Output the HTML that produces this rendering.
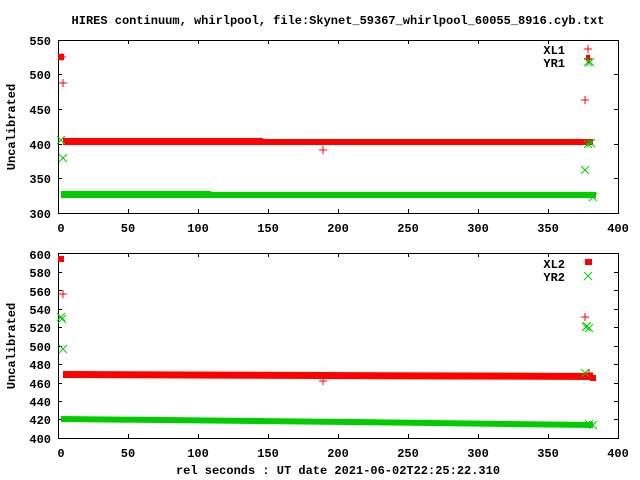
<!DOCTYPE html>
<html><head><style>
html,body{margin:0;padding:0;background:#fff;}
svg{display:block}
text{font-family:"Liberation Mono",monospace;font-weight:bold;font-size:12px;fill:#000}
</style></head><body>
<svg width="640" height="480" viewBox="0 0 640 480" xmlns="http://www.w3.org/2000/svg">
<defs>
<symbol id="p" overflow="visible"><path d="M-4 0H4M0 -4V4" stroke="#f00" stroke-width="1"/></symbol>
<symbol id="x" overflow="visible"><path d="M-4 -4L4 4M-4 4L4 -4" stroke="#0c0" stroke-width="1"/></symbol>
</defs>
<text x="338" y="24" text-anchor="middle">HIRES continuum, whirlpool, file:Skynet_59367_whirlpool_60055_8916.cyb.txt</text>

<!-- Plot 1 -->
<g stroke="#000" stroke-width="1" fill="none">
<rect x="58.5" y="40.5" width="560" height="173"/>
<path d="M128.5 213V209M198.5 213V209M268.5 213V209M338.5 213V209M408.5 213V209M478.5 213V209M548.5 213V209
M128.5 40V44M198.5 40V44M268.5 40V44M338.5 40V44M408.5 40V44M478.5 40V44M548.5 40V44
M58 74.5H62M58 109.5H62M58 144.5H62M58 178.5H62
M618 74.5H614M618 109.5H614M618 144.5H614M618 178.5H614"/>
</g>
<g text-anchor="end">
<text x="51" y="45">550</text><text x="51" y="79">500</text><text x="51" y="114">450</text>
<text x="51" y="149">400</text><text x="51" y="183">350</text><text x="51" y="218">300</text>
</g>
<g text-anchor="middle">
<text x="61" y="232">0</text><text x="128" y="232">50</text><text x="198" y="232">100</text>
<text x="268" y="232">150</text><text x="338" y="232">200</text><text x="408" y="232">250</text>
<text x="478" y="232">300</text><text x="548" y="232">350</text><text x="618" y="232">400</text>
</g>
<text transform="translate(15,127) rotate(-90)" text-anchor="middle">Uncalibrated</text>
<text x="565" y="54" text-anchor="end">XL1</text>
<text x="565" y="67" text-anchor="end">YR1</text>
<use href="#p" x="588" y="49"/>
<use href="#x" x="588" y="62"/>
<!-- data 1 -->
<rect x="63" y="139" width="530" height="6" fill="#f00"/>
<rect x="63" y="138" width="200" height="2" fill="#f00"/>
<rect x="61" y="192" width="535" height="6" fill="#0c0"/>
<rect x="61" y="191" width="150" height="2" fill="#0c0"/>
<rect x="58" y="54" width="6" height="6" fill="#f00"/>
<use href="#p" x="62" y="57"/><use href="#p" x="63" y="83"/>
<use href="#x" x="61" y="140"/><use href="#x" x="63" y="158"/>
<use href="#p" x="323" y="150"/>
<use href="#p" x="585" y="100"/><use href="#x" x="585" y="170"/>
<use href="#p" x="588" y="59"/><rect x="586" y="55" width="4" height="5" fill="#f00"/>
<use href="#x" x="588" y="144"/><use href="#x" x="591" y="143"/>
<use href="#x" x="593" y="197"/><use href="#x" x="590" y="62"/>

<!-- Plot 2 -->
<g stroke="#000" stroke-width="1" fill="none">
<rect x="58.5" y="253.5" width="560" height="185"/>
<path d="M128.5 438V434M198.5 438V434M268.5 438V434M338.5 438V434M408.5 438V434M478.5 438V434M548.5 438V434
M128.5 253V257M198.5 253V257M268.5 253V257M338.5 253V257M408.5 253V257M478.5 253V257M548.5 253V257
M58 272.5H62M58 290.5H62M58 309.5H62M58 327.5H62M58 346.5H62M58 364.5H62M58 383.5H62M58 401.5H62M58 419.5H62
M618 272.5H614M618 290.5H614M618 309.5H614M618 327.5H614M618 346.5H614M618 364.5H614M618 383.5H614M618 401.5H614M618 419.5H614"/>
</g>
<g text-anchor="end">
<text x="51" y="259">600</text><text x="51" y="277">580</text><text x="51" y="296">560</text>
<text x="51" y="314">540</text><text x="51" y="332">520</text><text x="51" y="351">500</text>
<text x="51" y="369">480</text><text x="51" y="388">460</text><text x="51" y="406">440</text>
<text x="51" y="424">420</text><text x="51" y="443">400</text>
</g>
<g text-anchor="middle">
<text x="61" y="457">0</text><text x="128" y="457">50</text><text x="198" y="457">100</text>
<text x="268" y="457">150</text><text x="338" y="457">200</text><text x="408" y="457">250</text>
<text x="478" y="457">300</text><text x="548" y="457">350</text><text x="618" y="457">400</text>
</g>
<text transform="translate(15,346) rotate(-90)" text-anchor="middle">Uncalibrated</text>
<text x="565" y="268" text-anchor="end">XL2</text>
<text x="565" y="281" text-anchor="end">YR2</text>
<rect x="585" y="259" width="7" height="6" fill="#f00"/>
<use href="#x" x="588" y="276"/>
<text x="338" y="474" text-anchor="middle">rel seconds : UT date 2021-06-02T22:25:22.310</text>
<!-- data 2 -->
<path d="M63 371 L593 373 L593 380 L63 378Z" fill="#f00"/>
<path d="M61 416 L350 419 L593 422 L593 428 L350 425 L61 422Z" fill="#0c0"/>
<rect x="58" y="591" width="0" height="0"/>
<rect x="58" y="256" width="6" height="6" fill="#f00"/>
<use href="#p" x="63" y="294"/>
<use href="#x" x="61" y="317"/><use href="#x" x="62" y="319"/>
<use href="#x" x="63" y="349"/>
<use href="#p" x="323" y="381"/>
<use href="#p" x="585" y="317"/>
<use href="#x" x="587" y="326"/><use href="#x" x="589" y="328"/><use href="#x" x="586" y="327"/>
<use href="#x" x="585" y="373"/><use href="#p" x="589" y="373"/>
<rect x="590" y="375" width="6" height="6" fill="#f00"/>
<use href="#x" x="589" y="424"/><use href="#x" x="593" y="425"/>
</svg>
</body></html>
